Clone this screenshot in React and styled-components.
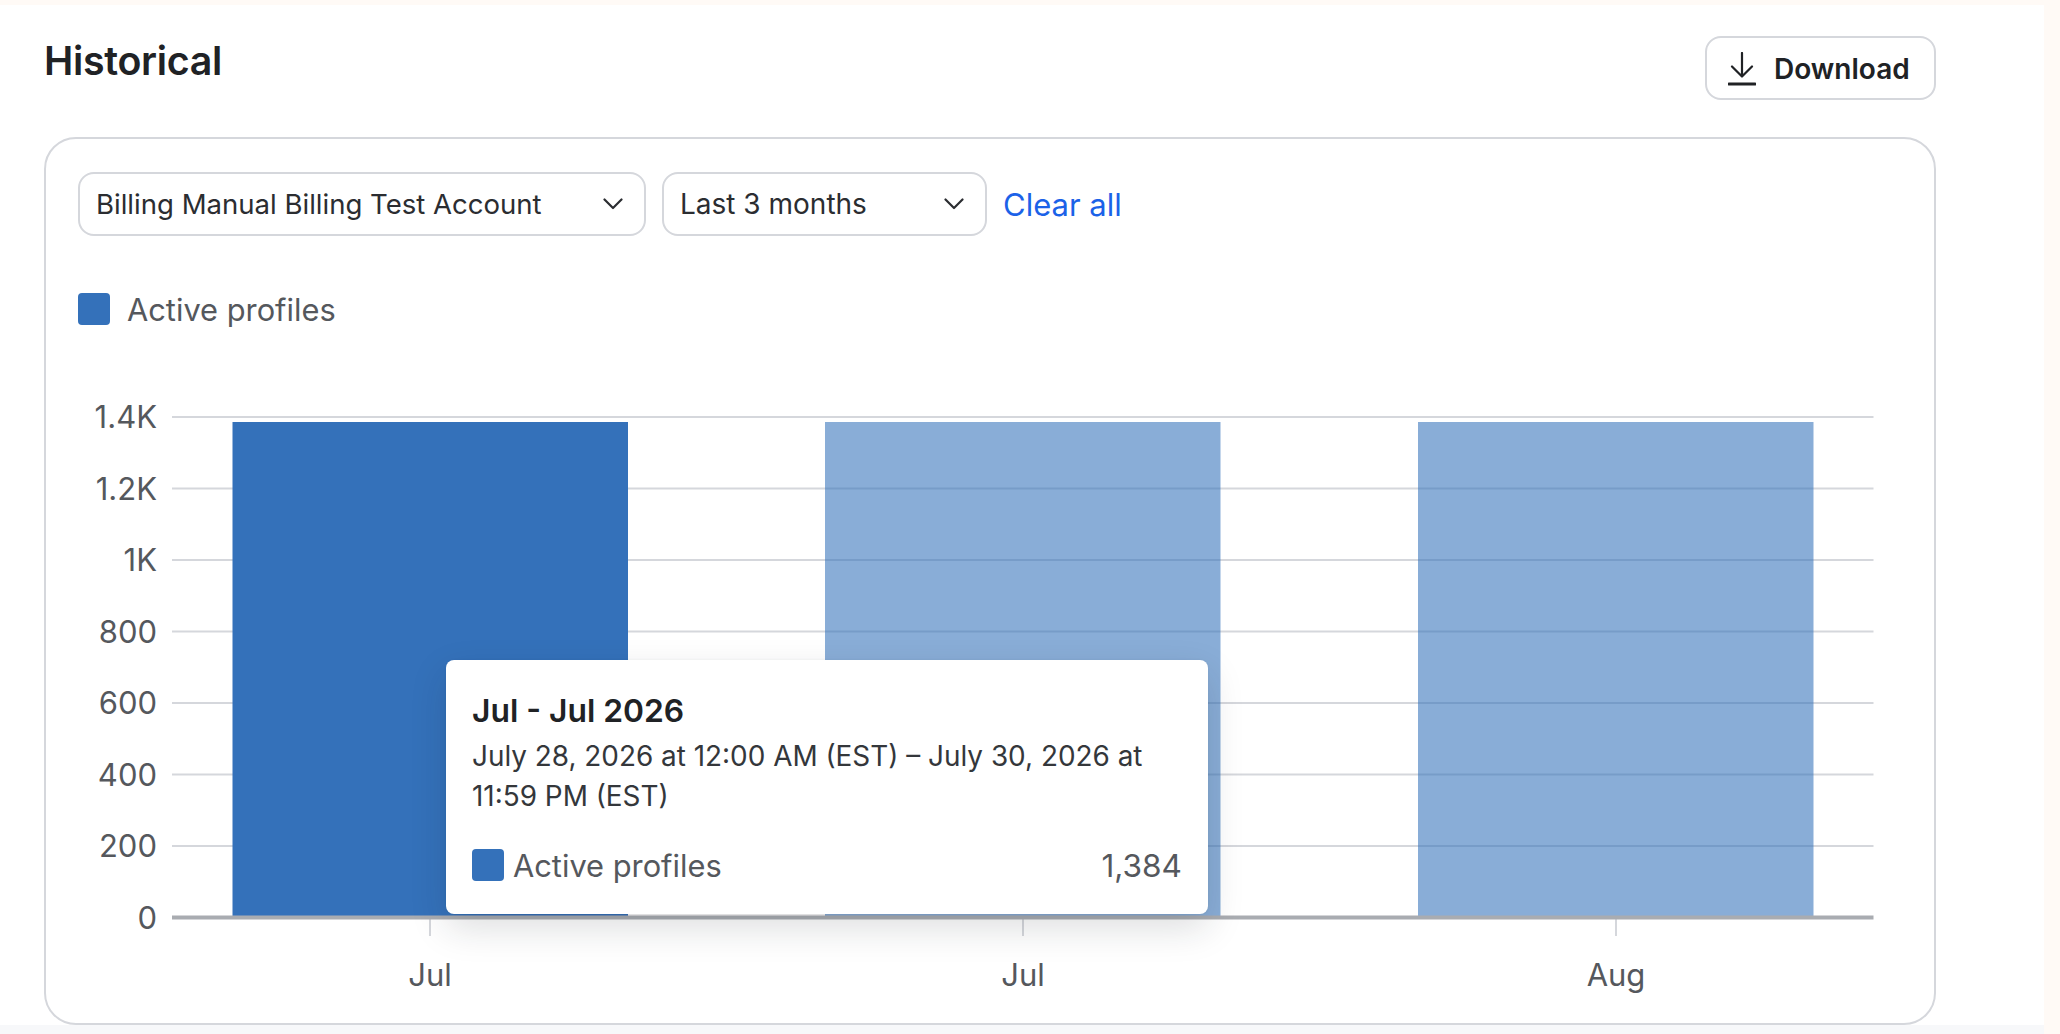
import React from 'react';
import styled, { createGlobalStyle } from 'styled-components';

const Global = createGlobalStyle`
  html, body { margin: 0; padding: 0; background: #fffaf6; }
  * { box-sizing: border-box; }
  body { font-family: Inter, "Liberation Sans", sans-serif; }
`;

const Page = styled.div`
  width: 2060px; height: 1034px; overflow: hidden;
  background: #fffaf6; padding-top: 5px;
`;
const Panel = styled.main`
  width: 2044px; height: 1029px; background: #fff;
  display: flex; flex-direction: column;
  padding: 31px 108px 0 44px;
  position: relative;
`;
const Header = styled.header`
  display: flex; justify-content: space-between; align-items: flex-start;
  height: 101px;
`;
const Title = styled.h1`
  margin: 0; font-size: 39.3px; line-height: 50px; font-weight: 600; color: #202225;
  letter-spacing: -0.3px;
`;
const DownloadButton = styled.button`
  width: 231px; height: 64px; display: flex; align-items: center; gap: 18px;
  padding: 2px 0 0 21px; background: #fff; border: 2px solid #d5d7dc; border-radius: 16px;
  font: 600 28px Inter, sans-serif; color: #202225;
`;
const Card = styled.section`
  width: 1892px; height: 888px; border: 2px solid #d5d7dc; border-radius: 32px;
  padding: 33px 32px 0; display: flex; flex-direction: column; position: relative;
`;
const Filters = styled.div`
  display: flex; align-items: center; gap: 16px; height: 64px;
`;
const Select = styled.button`
  width: ${p => p.$w}px; height: 64px; flex: none; display: flex; align-items: center; justify-content: space-between;
  padding: 0 21px 0 16px; background: #fff; border: 2px solid #d5d7dc; border-radius: 16px;
  font: 400 ${p => p.$size}px Inter, sans-serif; color: #2b2d31;
`;
const ClearAll = styled.a`
  font-size: 31px; color: #1b62e8; text-decoration: none;
`;
const Legend = styled.div`
  display: flex; align-items: center; gap: 17px; margin-top: 57px; height: 32px;
  padding-top: 1px;
  font-size: 30.8px; color: #55585d;
`;
const Swatch = styled.span`
  width: 32px; height: 32px; flex: none; border-radius: 4px; background: #3471ba;
  margin-top: -1px;
`;
const Chart = styled.svg`
  display: block; position: absolute; left: -46px; top: -139px; pointer-events: none;
  text { font-family: Inter, sans-serif; font-size: 31px; fill: #55585d; }
`;
const Tooltip = styled.div`
  position: absolute; left: 400px; top: 521px; width: 762px; height: 254px;
  background: #fff; border-radius: 8px; padding: 31px 26px 0;
  box-shadow: 0 14px 36px rgba(30, 34, 40, 0.15), 0 0 3px rgba(30, 34, 40, 0.06);
`;
const TipTitle = styled.div`
  font-size: 31.8px; line-height: 40px; font-weight: 600; color: #202225;
`;
const TipBody = styled.div`
  font-size: 27.9px; line-height: 40px; color: #34373b; margin-top: 5px;
`;
const TipRow = styled.div`
  display: flex; align-items: center; margin-top: 33px; height: 32px;
  font-size: 30.8px; color: #55585d; gap: 9px;
`;
const TipValue = styled.span`
  margin-left: auto; font-size: 31.6px;
`;
const BottomStrip = styled.div`
  position: absolute; left: 0; right: 0; bottom: 0; height: 9px; background: #f7f8fa;
`;

const Chevron = () => (
  <svg width="20" height="12" viewBox="0 0 20 12" fill="none">
    <path d="M1.5 1.5 L10 10 L18.5 1.5" stroke="#2b2d31" strokeWidth="2.2" strokeLinecap="round" strokeLinejoin="round" />
  </svg>
);

const DownloadIcon = () => (
  <svg width="28" height="34" viewBox="0 0 28 34" fill="none">
    <path d="M14 1 V24 M4 14.5 L14 24.5 L24 14.5" stroke="#202225" strokeWidth="2.2" strokeLinecap="round" strokeLinejoin="round" />
    <path d="M1 32 H27" stroke="#202225" strokeWidth="3.2" strokeLinecap="round" />
  </svg>
);

const gridY = [417, 488.5, 560, 631.5, 703, 774.5, 846];
const yLabels = ['1.4K', '1.2K', '1K', '800', '600', '400', '200'];
const bars = [
  { x: 232.5, light: false, tick: 430, label: 'Jul' },
  { x: 825, light: true, tick: 1023, label: 'Jul' },
  { x: 1418, light: true, tick: 1616, label: 'Aug' },
];

const ChartDrawing = () => (
  <Chart width="2060" height="1034" viewBox="0 0 2060 1034">
    {gridY.map((y, i) => (
      <g key={y}>
        <line x1="172" x2="1873.5" y1={y} y2={y} stroke="#d5d7dc" strokeWidth="2" />
        <text x="157" y={y + 11} textAnchor="end">{yLabels[i]}</text>
      </g>
    ))}
    <text x="157" y="929" textAnchor="end">0</text>
    {bars.map(b => (
      <g key={b.x}>
        <rect x={b.x} y="422" width="395.5" height="494" fill="#3471ba" fillOpacity={b.light ? 0.58 : 1} />
        <line x1={b.tick} x2={b.tick} y1="918" y2="936" stroke="#d5d7dc" strokeWidth="2" />
        <text x={b.tick} y="986" textAnchor="middle">{b.label}</text>
      </g>
    ))}
    <line x1="172" x2="1873.5" y1="917.5" y2="917.5" stroke="#a9acb1" strokeWidth="4" />
  </Chart>
);

export default function App() {
  return (
    <Page>
      <Global />
      <Panel>
        <BottomStrip />
        <Header>
          <Title>Historical</Title>
          <DownloadButton><DownloadIcon />Download</DownloadButton>
        </Header>
        <Card>
          <Filters>
            <Select $w={568} $size={27.55}>Billing Manual Billing Test Account<Chevron /></Select>
            <Select $w={325} $size={28}>Last 3 months<Chevron /></Select>
            <ClearAll>Clear all</ClearAll>
          </Filters>
          <Legend><Swatch />Active profiles</Legend>
          <ChartDrawing />
          <Tooltip>
            <TipTitle>Jul - Jul 2026</TipTitle>
            <TipBody>July 28, 2026 at 12:00 AM (EST) – July 30, 2026 at 11:59 PM (EST)</TipBody>
            <TipRow><Swatch />Active profiles<TipValue>1,384</TipValue></TipRow>
          </Tooltip>
        </Card>
      </Panel>
    </Page>
  );
}
